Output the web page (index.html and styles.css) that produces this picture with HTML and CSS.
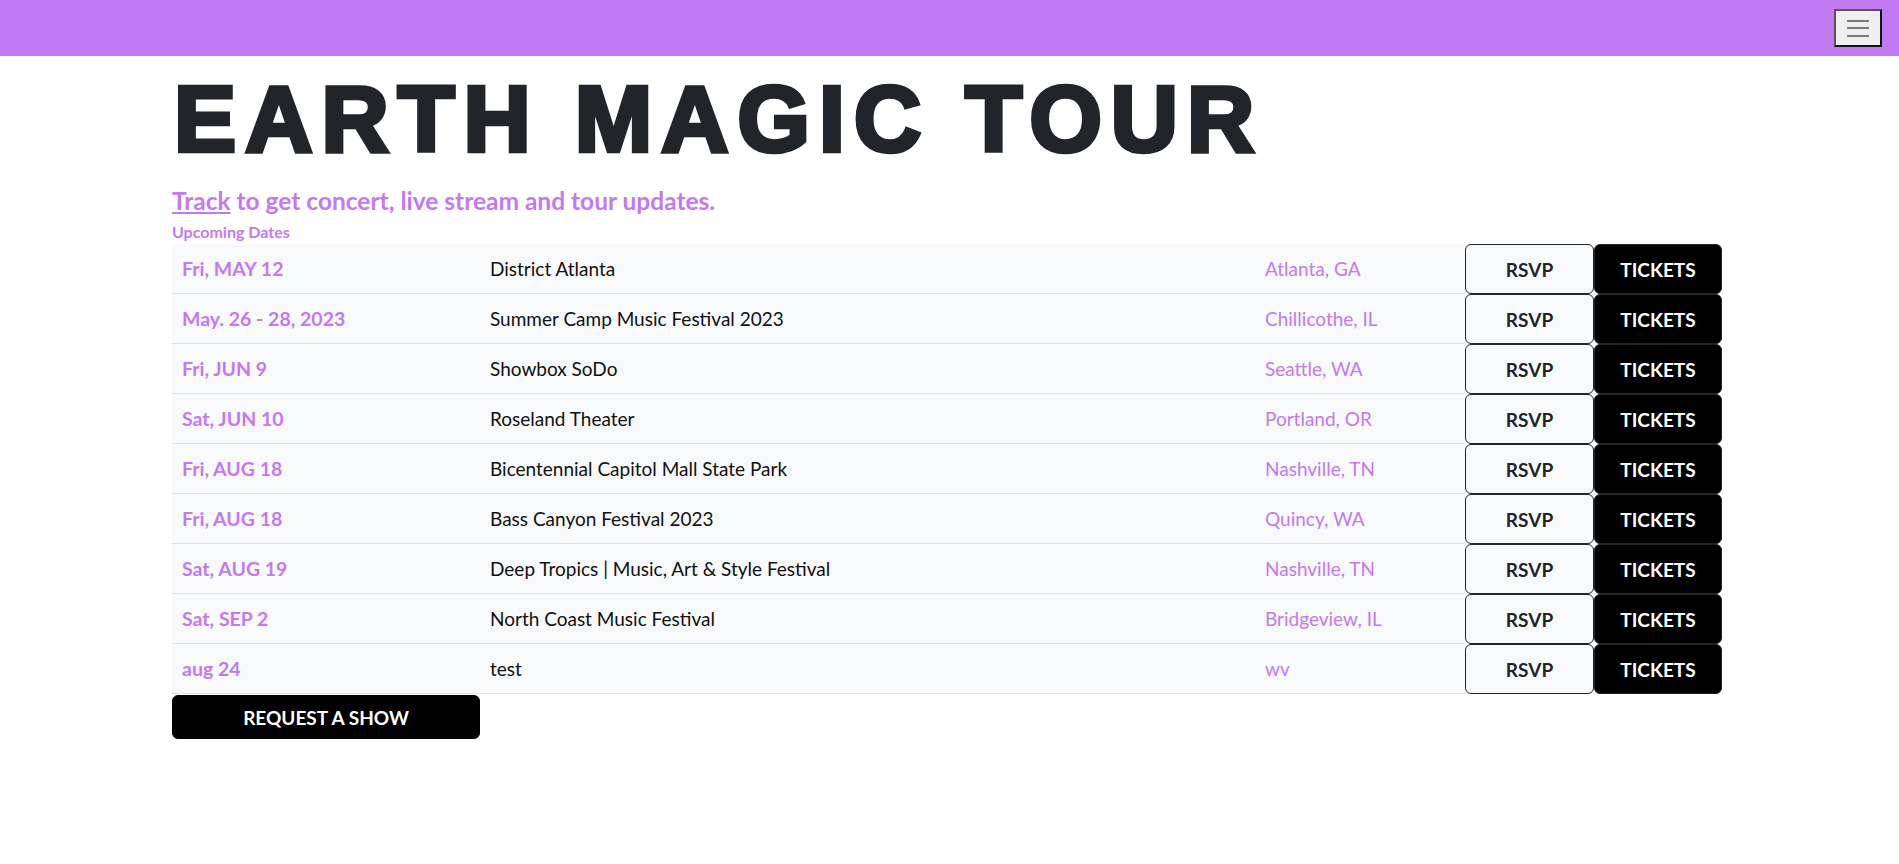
FILE: index.html
```html
<!DOCTYPE html>
<html lang="en">
<head>
<meta charset="utf-8">
<title>Earth Magic Tour</title>
<link rel="stylesheet" href="styles.css">
</head>
<body>
<nav class="navbar">
  <button class="toggler" aria-label="Menu">
    <span class="bar"></span><span class="bar"></span><span class="bar"></span>
  </button>
</nav>
<main class="page">
  <h1 class="title">EARTH MAGIC TOUR</h1>
  <p class="lead"><a href="#" class="track">Track</a> to get concert, live stream and tour updates.</p>
  <p class="label">Upcoming Dates</p>
  <div class="dates">
    <div class="row"><div class="cell date">Fri, MAY 12</div><div class="cell venue">District Atlanta</div><div class="cell city">Atlanta, GA</div><button class="btn rsvp">RSVP</button><button class="btn tickets">TICKETS</button></div>
    <div class="row"><div class="cell date">May. 26 - 28, 2023</div><div class="cell venue">Summer Camp Music Festival 2023</div><div class="cell city">Chillicothe, IL</div><button class="btn rsvp">RSVP</button><button class="btn tickets">TICKETS</button></div>
    <div class="row"><div class="cell date">Fri, JUN 9</div><div class="cell venue">Showbox SoDo</div><div class="cell city">Seattle, WA</div><button class="btn rsvp">RSVP</button><button class="btn tickets">TICKETS</button></div>
    <div class="row"><div class="cell date">Sat, JUN 10</div><div class="cell venue">Roseland Theater</div><div class="cell city">Portland, OR</div><button class="btn rsvp">RSVP</button><button class="btn tickets">TICKETS</button></div>
    <div class="row"><div class="cell date">Fri, AUG 18</div><div class="cell venue">Bicentennial Capitol Mall State Park</div><div class="cell city">Nashville, TN</div><button class="btn rsvp">RSVP</button><button class="btn tickets">TICKETS</button></div>
    <div class="row"><div class="cell date">Fri, AUG 18</div><div class="cell venue">Bass Canyon Festival 2023</div><div class="cell city">Quincy, WA</div><button class="btn rsvp">RSVP</button><button class="btn tickets">TICKETS</button></div>
    <div class="row"><div class="cell date">Sat, AUG 19</div><div class="cell venue">Deep Tropics | Music, Art &amp; Style Festival</div><div class="cell city">Nashville, TN</div><button class="btn rsvp">RSVP</button><button class="btn tickets">TICKETS</button></div>
    <div class="row"><div class="cell date">Sat, SEP 2</div><div class="cell venue">North Coast Music Festival</div><div class="cell city">Bridgeview, IL</div><button class="btn rsvp">RSVP</button><button class="btn tickets">TICKETS</button></div>
    <div class="row"><div class="cell date">aug 24</div><div class="cell venue">test</div><div class="cell city">wv</div><button class="btn rsvp">RSVP</button><button class="btn tickets">TICKETS</button></div>
  </div>
  <button class="request">REQUEST A SHOW</button>
</main>
</body>
</html>
```

FILE: styles.css
```css
* { box-sizing: border-box; }
html, body { margin: 0; padding: 0; }
body {
  font-family: Lato, "Noto Sans", sans-serif;
  font-size: 19px;
  color: #212529;
  background: #fff;
}
.navbar {
  height: 56px;
  background: #c27af2;
  display: flex;
  justify-content: flex-end;
  align-items: flex-start;
  padding: 9px 17px 0 0;
}
.toggler {
  width: 48px;
  height: 38px;
  background: #efefef;
  border: 2px solid #2a2a2a;
  border-color: #555 #111 #111 #555;
  display: flex;
  flex-direction: column;
  justify-content: center;
  align-items: center;
  gap: 5.5px;
  padding: 0;
}
.bar {
  display: block;
  width: 22px;
  height: 2px;
  background: #7a7a7a;
}
.page {
  padding-left: 172px;
}
.title {
  margin: 8px 0 0;
  padding-left: 2px;
  font-family: "Liberation Sans", Arial, sans-serif;
  font-weight: 700;
  font-size: 93px;
  line-height: 1.2;
  letter-spacing: 9.1px;
  -webkit-text-stroke: 4.5px #212529;
  color: #212529;
}
.lead {
  margin: 10px 0 0;
  font-size: 24.5px;
  font-weight: 700;
  color: #c27af2;
  line-height: 1.2;
}
.track {
  color: #c27af2;
  text-decoration: underline;
}
.label {
  margin: 6px 0 0;
  font-size: 16px;
  font-weight: 700;
  color: #c27af2;
  line-height: 1.4;
}
.dates {
  width: 1550px;
  margin-top: 1px;
}
.row {
  display: grid;
  grid-template-columns: 308px 775px 210px 129px 128px;
  height: 50px;
}
.cell {
  background: #f8f9fa;
  border-bottom: 1px solid #dee2e6;
  padding: 0 10px;
  display: flex;
  align-items: center;
  font-size: 19px;
}
.date {
  color: #c27af2;
  font-weight: 700;
  font-size: 19.5px;
}
.venue { color: #111; }
.city { color: #c27af2; }
.btn {
  height: 50px;
  font-family: inherit;
  font-size: 19px;
  font-weight: 700;
  border-radius: 6px;
  border: 1px solid #212529;
  padding: 0;
  cursor: pointer;
}
.rsvp {
  background: #f8f9fa;
  color: #212529;
}
.tickets {
  background: #000;
  color: #fff;
}
.request {
  margin-top: 1px;
  width: 308px;
  height: 44px;
  background: #000;
  color: #fff;
  border: 1px solid #000;
  border-radius: 6px;
  font-family: inherit;
  font-size: 19px;
  font-weight: 700;
}
```
